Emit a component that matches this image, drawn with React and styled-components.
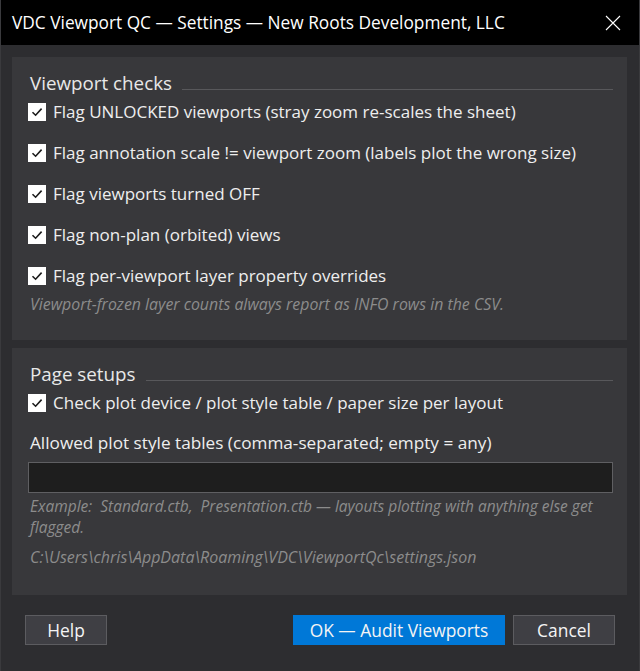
import React, { useState } from 'react';
import styled, { createGlobalStyle } from 'styled-components';

const GlobalStyle = createGlobalStyle`
  html, body {
    margin: 0;
    padding: 0;
    background: #2d2d30;
  }
  * {
    box-sizing: border-box;
  }
`;

const checks = [
  'Flag UNLOCKED viewports (stray zoom re-scales the sheet)',
  'Flag annotation scale != viewport zoom (labels plot the wrong size)',
  'Flag viewports turned OFF',
  'Flag non-plan (orbited) views',
  'Flag per-viewport layer property overrides',
];

const CheckBox = ({ checked, onToggle, label }) => (
  <CheckRow onClick={onToggle}>
    <Box>
      {checked && (
        <svg width="14" height="14" viewBox="0 0 14 14">
          <path d="M2.5 7.2 L5.6 10.2 L11.6 3.6" fill="none" stroke="#1b1b1b" strokeWidth="1.6" />
        </svg>
      )}
    </Box>
    <CheckLabel>{label}</CheckLabel>
  </CheckRow>
);

const App = () => {
  const [flags, setFlags] = useState(checks.map(() => true));
  const [pageCheck, setPageCheck] = useState(true);
  const [tables, setTables] = useState('');

  const toggle = (i) => {
    const next = [...flags];
    next[i] = !next[i];
    setFlags(next);
  };

  return (
    <Window>
      <GlobalStyle />
      <TitleBar>
        <Title>VDC Viewport QC — Settings — New Roots Development, LLC</Title>
        <CloseButton aria-label="Close">
          <svg width="16" height="16" viewBox="0 0 16 16">
            <path d="M1 1 L15 15 M15 1 L1 15" stroke="#ffffff" strokeWidth="1.1" fill="none" />
          </svg>
        </CloseButton>
      </TitleBar>

      <Body>
        <Panel>
          <Heading>
            <HeadingText>Viewport checks</HeadingText>
            <HeadingRule />
          </Heading>
          <CheckList>
            {checks.map((c, i) => (
              <CheckBox key={c} label={c} checked={flags[i]} onToggle={() => toggle(i)} />
            ))}
          </CheckList>
          <Note>Viewport-frozen layer counts always report as INFO rows in the CSV.</Note>
        </Panel>

        <Panel bottom={27}>
          <Heading>
            <HeadingText>Page setups</HeadingText>
            <HeadingRule />
          </Heading>
          <CheckList>
            <CheckBox
              label="Check plot device / plot style table / paper size per layout"
              checked={pageCheck}
              onToggle={() => setPageCheck(!pageCheck)}
            />
          </CheckList>
          <FieldLabel>Allowed plot style tables (comma-separated; empty = any)</FieldLabel>
          <TextInput value={tables} onChange={(e) => setTables(e.target.value)} />
          <Hint>Example:&nbsp; Standard.ctb,&nbsp; Presentation.ctb — layouts plotting with anything else get flagged.</Hint>
          <Path>C:\Users\chris\AppData\Roaming\VDC\ViewportQc\settings.json</Path>
        </Panel>
      </Body>

      <Footer>
        <Button>Help</Button>
        <Spacer />
        <Button primary width={212}>OK — Audit Viewports</Button>
        <Button width={102}>Cancel</Button>
      </Footer>
    </Window>
  );
};

const Window = styled.div`
  width: 640px;
  height: 671px;
  background: #2d2d30;
  border-left: 1px solid #3a3a3d;
  border-right: 1px solid #3a3a3d;
  display: flex;
  flex-direction: column;
  font-family: 'Open Sans', 'Noto Sans', sans-serif;
  color: #f1f1f1;
`;

const TitleBar = styled.div`
  height: 45px;
  flex-shrink: 0;
  background: #000;
  display: flex;
  align-items: center;
  padding: 0 0 0 11px;
`;

const Title = styled.div`
  flex: 1;
  font-size: 17.3px;
  color: #ffffff;
  white-space: nowrap;
`;

const CloseButton = styled.div`
  width: 46px;
  height: 45px;
  display: flex;
  align-items: center;
  justify-content: center;
  margin-right: 3px;
`;

const Body = styled.div`
  display: flex;
  flex-direction: column;
  gap: 8px;
  padding: 12px 12px 0 11px;
`;

const Panel = styled.div`
  background: #38383b;
  padding: 14px 14px ${({ bottom }) => bottom || 26}px 16px;
  display: flex;
  flex-direction: column;
`;

const Heading = styled.div`
  display: flex;
  align-items: center;
  height: 24px;
  padding-left: 2px;
`;

const HeadingText = styled.span`
  font-size: 18.8px;
  line-height: 24px;
  color: #e8e8e8;
`;

const HeadingRule = styled.div`
  flex: 1;
  height: 1px;
  background: #58585b;
  margin: 12px 0 0 10px;
`;

const CheckList = styled.div`
  display: flex;
  flex-direction: column;
  gap: 17px;
  margin-top: 5px;
`;

const CheckRow = styled.label`
  display: flex;
  align-items: center;
  height: 24px;
  cursor: pointer;
`;

const Box = styled.span`
  width: 18px;
  height: 18px;
  background: #ffffff;
  display: flex;
  align-items: center;
  justify-content: center;
  margin-right: 7px;
  flex-shrink: 0;
`;

const CheckLabel = styled.span`
  font-size: 17px;
  line-height: 24px;
  color: #eeeeee;
  white-space: nowrap;
`;

const Note = styled.div`
  margin-top: 6px;
  padding-left: 2px;
  font-size: 15.9px;
  line-height: 20px;
  font-style: italic;
  color: #8c8c8c;
  white-space: nowrap;
`;

const FieldLabel = styled.div`
  margin-top: 17px;
  padding-left: 2px;
  font-size: 17.2px;
  line-height: 22px;
  color: #eeeeee;
`;

const TextInput = styled.input`
  margin-top: 8px;
  height: 31px;
  width: 100%;
  background: #1e1e1e;
  border: 1px solid #5f5f62;
  color: #f1f1f1;
  font: inherit;
  font-size: 15px;
  padding: 0 6px;
  outline: none;
`;

const Hint = styled.div`
  margin-top: 3px;
  padding-left: 2px;
  font-size: 15.5px;
  line-height: 21px;
  font-style: italic;
  color: #8c8c8c;
`;

const Path = styled(Hint)`
  margin-top: 9px;
  font-size: 16px;
`;

const Footer = styled.div`
  display: flex;
  align-items: center;
  gap: 8px;
  padding: 20px 24px 0 24px;
`;

const Spacer = styled.div`
  flex: 1;
`;

const Button = styled.button`
  height: 30px;
  width: ${({ width }) => width || 82}px;
  background: ${({ primary }) => (primary ? '#0078d7' : '#3f3f44')};
  border: 1px solid ${({ primary }) => (primary ? '#0078d7' : '#5c5c60')};
  color: #f4f4f4;
  font-family: inherit;
  font-size: 17.4px;
  padding: 0;
  cursor: pointer;
`;

export default App;
